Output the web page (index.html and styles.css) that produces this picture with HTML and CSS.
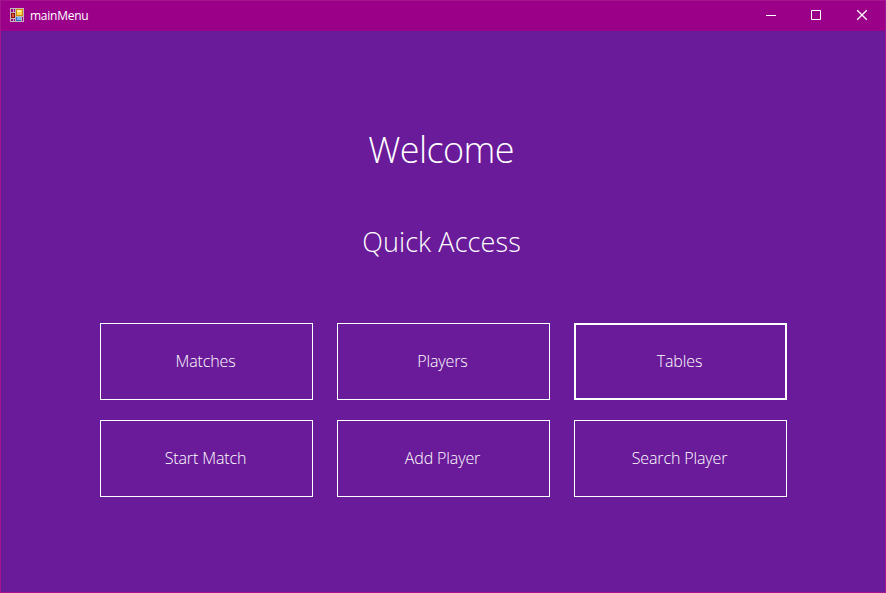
FILE: index.html
```html
<!DOCTYPE html>
<html lang="en">
<head>
<meta charset="utf-8">
<title>mainMenu</title>
<link rel="stylesheet" href="styles.css">
</head>
<body>
<div class="window">
  <header class="titlebar">
    <svg class="app-icon" width="14" height="14" viewBox="0 0 14 14" shape-rendering="crispEdges">
      <path fill="#c4b4bc" d="M0 0h14v14H0z"/>
      <path fill="#9b0089" d="M1 1h2v3H1zM4 1h1v3H4zM1 11h2v2H1zM4 11h1v2H4zM12 9h1v4h-1z"/>
      <path fill="#8d1710" d="M1 5h4v5H1z"/>
      <path fill="#df543c" d="M2 6h2v3H2z"/>
      <path fill="#d08b05" d="M6 1h7v7H6z"/>
      <path fill="#ffd34d" d="M7 2h5v5H7z"/>
      <path fill="#fff0a4" d="M7 2h4v2H7z"/>
      <path fill="#3267c4" d="M6 9h5v4H6z"/>
      <path fill="#78b5f5" d="M7 9h4v3H7z"/>
    </svg>
    <span class="caption">mainMenu</span>
    <div class="controls">
      <button class="control control-min" aria-label="Minimize"><svg width="10" height="10"><path d="M0 5.5h10"/></svg></button>
      <button class="control" aria-label="Maximize"><svg width="10" height="10"><path d="M.5.5h9v9h-9z"/></svg></button>
      <button class="control" aria-label="Close"><svg width="10" height="10"><path stroke-width="1.3" d="M.2.2l9.6 9.6M9.8.2L.2 9.8"/></svg></button>
    </div>
  </header>
  <main class="content">
    <h1 class="welcome">Welcome</h1>
    <h2 class="subtitle">Quick Access</h2>
    <div class="menu">
      <button class="tile">Matches</button>
      <button class="tile">Players</button>
      <button class="tile tile-focused">Tables</button>
      <button class="tile">Start Match</button>
      <button class="tile">Add Player</button>
      <button class="tile">Search Player</button>
    </div>
  </main>
</div>
</body>
</html>
```
FILE: styles.css
```css
* { box-sizing: border-box; }
body { margin: 0; overflow: hidden; color: #fff; }
button { margin: 0; padding: 0; background: none; border: 0; color: inherit; }
.window {
  width: 886px;
  height: 593px;
  border: 1px solid #a5148f;
  background: #6a1b9a;
  display: flex;
  flex-direction: column;
}
.titlebar {
  height: 30px;
  flex: none;
  display: flex;
  align-items: center;
  padding-left: 9px;
  background: #9b0089;
}
.app-icon { display: block; margin-bottom: 2px; }
.caption {
  margin: 0 0 1px 6px;
  font: 12px/16px "Open Sans", sans-serif;
  letter-spacing: -0.25px;
}
.controls { display: flex; margin-left: auto; }
.control {
  width: 46px;
  height: 30px;
  padding-bottom: 2px;
  display: flex;
  align-items: center;
  justify-content: center;
}
.control-min { width: 44px; }
.control svg { display: block; overflow: visible; fill: none; stroke: #fff; }
.content {
  flex: 1;
  display: flex;
  flex-direction: column;
  align-items: center;
  font-family: "Open Sans", sans-serif;
  font-weight: 300;
}
.welcome {
  margin: 94px 4px 0 0;
  font-size: 36px;
  line-height: 50px;
  font-weight: 300;
  letter-spacing: -0.6px;
}
.subtitle {
  margin: 47px 3px 0 0;
  font-size: 27px;
  line-height: 40px;
  font-weight: 300;
  letter-spacing: 0.1px;
}
.menu {
  margin-top: 61px;
  margin-left: 1px;
  display: grid;
  grid-template-columns: repeat(3, 213px);
  grid-auto-rows: 77px;
  gap: 20px 24px;
}
.tile {
  padding: 0 2px 2px 0;
  border: 1px solid #fff;
  font: 300 16px/22px "Open Sans", sans-serif;
  letter-spacing: -0.12px;
}
.tile-focused { border-width: 2px; }
```
